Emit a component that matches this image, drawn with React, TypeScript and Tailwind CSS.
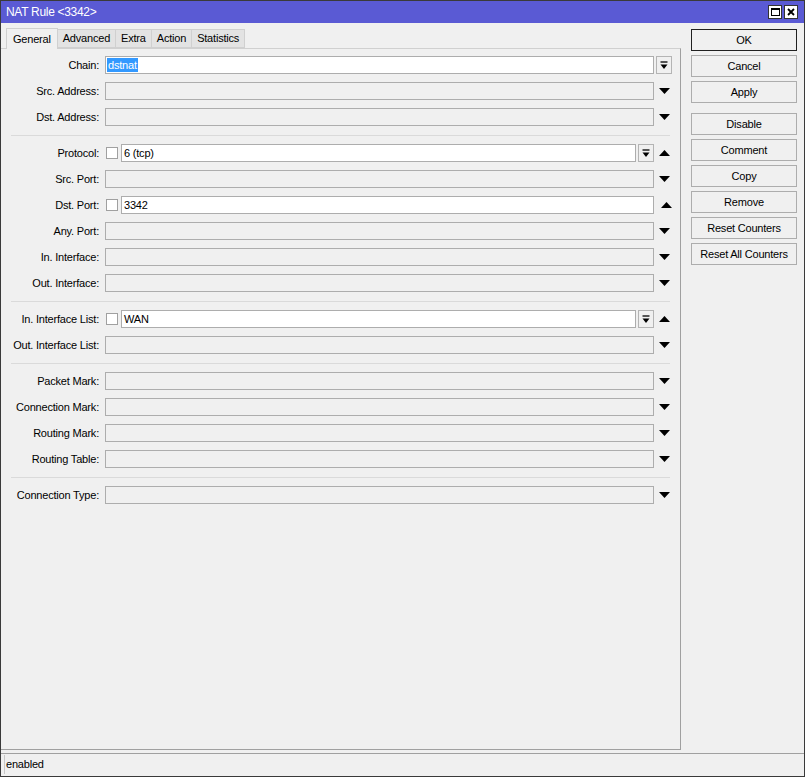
import React from 'react'

const font = { fontFamily: '"Liberation Sans", Arial, sans-serif' }

const DownArrow = () => (
    <svg width="11" height="7" viewBox="0 0 11 7"><path d="M0 0h11L5.5 6z" fill="#000" /></svg>
)
const UpArrow = () => (
    <svg width="11" height="7" viewBox="0 0 11 7"><path d="M0 6h11L5.5 0z" fill="#000" /></svg>
)
const DropBtn = () => (
    <div className="w-[16px] h-[18px] ml-[2px] border border-[#b4b4b4] bg-[#f0f0f0] flex items-center justify-center">
        <svg width="8" height="9" viewBox="0 0 8 9"><path d="M0.5 1h7" stroke="#000" strokeWidth="1.3" /><path d="M0.5 3.5h7L4 8z" fill="#000" /></svg>
    </div>
)

type Row = { label: string; value?: string; check?: boolean; chain?: boolean }

const groups: Row[][] = [
    [{ label: 'Chain:', value: 'dstnat', chain: true }, { label: 'Src. Address:' }, { label: 'Dst. Address:' }],
    [
        { label: 'Protocol:', value: '6 (tcp)', check: true },
        { label: 'Src. Port:' },
        { label: 'Dst. Port:', value: '3342', check: true },
        { label: 'Any. Port:' },
        { label: 'In. Interface:' },
        { label: 'Out. Interface:' },
    ],
    [{ label: 'In. Interface List:', value: 'WAN', check: true }, { label: 'Out. Interface List:' }],
    [{ label: 'Packet Mark:' }, { label: 'Connection Mark:' }, { label: 'Routing Mark:' }, { label: 'Routing Table:' }],
    [{ label: 'Connection Type:' }],
]

const FieldRow = ({ r }: { r: Row }) => {
    const isDrop = r.label === 'Protocol:' || r.label === 'In. Interface List:'
    return (
        <div className="h-[26px] flex items-center">
            <div className="w-[99px] text-right pr-[1px] text-black">{r.label}</div>
            <div className="w-[5px]" />
            {r.chain ? (
                <>
                    <div className="w-[549px] h-[18px] border border-[#adadad] bg-white flex items-center pl-[1px]">
                        <span className="bg-[#3399ff] text-white px-[1px] leading-[14px]">{r.value}</span>
                    </div>
                    <DropBtn />
                </>
            ) : r.check ? (
                <>
                    <div className="w-[12px] h-[12px] border border-[#a0a0a0] bg-white mx-[1px]" />
                    <div className="w-[2px]" />
                    <div
                        className={`${isDrop ? 'w-[515px]' : 'w-[533px]'} h-[18px] border border-[#adadad] bg-white flex items-center pl-[2px]`}
                    >
                        {r.value}
                    </div>
                    {isDrop ? (
                        <DropBtn />
                    ) : (
                        <div className="w-[2px]" />
                    )}
                    <div className="w-[19px] flex justify-center pl-[1px]">
                        <UpArrow />
                    </div>
                </>
            ) : (
                <>
                    <div className="w-[549px] h-[18px] border border-[#adadad] bg-[#f0f0f0]" />
                    <div className="w-[19px] flex justify-center pl-[1px]">
                        <DownArrow />
                    </div>
                </>
            )}
        </div>
    )
}

const Sep = () => (
    <div className="h-[10px] flex items-center pl-[10px] pr-[10px]">
        <div className="w-full h-px bg-[#dadada]" />
    </div>
)

const buttons = ['OK', 'Cancel', 'Apply', '', 'Disable', 'Comment', 'Copy', 'Remove', 'Reset Counters', 'Reset All Counters']

export default function App() {
    const tabs = ['General', 'Advanced', 'Extra', 'Action', 'Statistics']
    return (
        <div className="w-[805px] h-[777px] border border-[#3a3a3a] bg-[#f0f0f0] flex flex-col text-[11px] tracking-[-0.2px] overflow-hidden" style={font}>
            {/* Title bar */}
            <div className="h-[22px] bg-[#5a5ad4] flex items-center justify-between pl-[5px] pr-[6px] shrink-0">
                <span className="text-white text-[12px] tracking-[-0.3px]">NAT Rule &lt;3342&gt;</span>
                <div className="flex gap-[2px]">
                    <div className="w-[14px] h-[14px] bg-white border border-[#333] flex items-center justify-center">
                        <div className="w-[9px] h-[8px] border border-black border-t-2" />
                    </div>
                    <div className="w-[14px] h-[14px] bg-white border border-[#333] flex items-center justify-center">
                        <svg width="8" height="8" viewBox="0 0 8 8"><path d="M1 1l6 6M7 1l-6 6" stroke="#000" strokeWidth="1.8" /></svg>
                    </div>
                </div>
            </div>

            <div className="flex flex-1 min-h-0">
                {/* Left: tabs and panel */}
                <div className="w-[680px] flex flex-col">
                    <div className="flex items-end h-[25px] pl-[5px] shrink-0">
                        {tabs.map((t, i) =>
                            i === 0 ? (
                                <div key={t} className="h-[21px] px-[6px] bg-[#f0f0f0] border border-b-0 border-[#d0d0d0] flex items-center relative -mb-px z-10 text-black">
                                    {t}
                                </div>
                            ) : (
                                <div key={t} className="h-[19px] px-[5px] bg-[#e3e3e3] border border-[#d0d0d0] -ml-px flex items-center text-black">
                                    {t}
                                </div>
                            ),
                        )}
                    </div>
                    <div className="flex-1 border-t border-r border-b border-[#d0d0d0] border-r-[#a0a0a0] border-b-[#a0a0a0] pt-[3px] mb-[3px]">
                        {groups.map((g, gi) => (
                            <React.Fragment key={gi}>
                                {gi > 0 && <Sep />}
                                {g.map((r) => (
                                    <FieldRow key={r.label} r={r} />
                                ))}
                            </React.Fragment>
                        ))}
                    </div>
                </div>

                {/* Right: buttons */}
                <div className="flex-1 pl-[10px] pr-[6px] pt-[6px] flex flex-col gap-[4px]">
                    {buttons.map((b, i) =>
                        b === '' ? (
                            <div key={i} className="h-[2px]" />
                        ) : (
                            <div
                                key={b}
                                className={`h-[22px] w-[106px] flex items-center justify-center bg-[#f0f0f0] border ${i === 0 ? 'border-[#202020]' : 'border-[#adadad]'} text-black`}
                            >
                                {b}
                            </div>
                        ),
                    )}
                </div>
            </div>

            {/* Status bar */}
            <div className="h-[23px] shrink-0 border-t border-[#a0a0a0] flex items-center pl-[3px] pt-[1px] pb-[2px]">
                <div className="w-full h-full border-l border-[#c8c8c8] flex items-center pl-[1px] text-black">enabled</div>
            </div>
        </div>
    )
}
